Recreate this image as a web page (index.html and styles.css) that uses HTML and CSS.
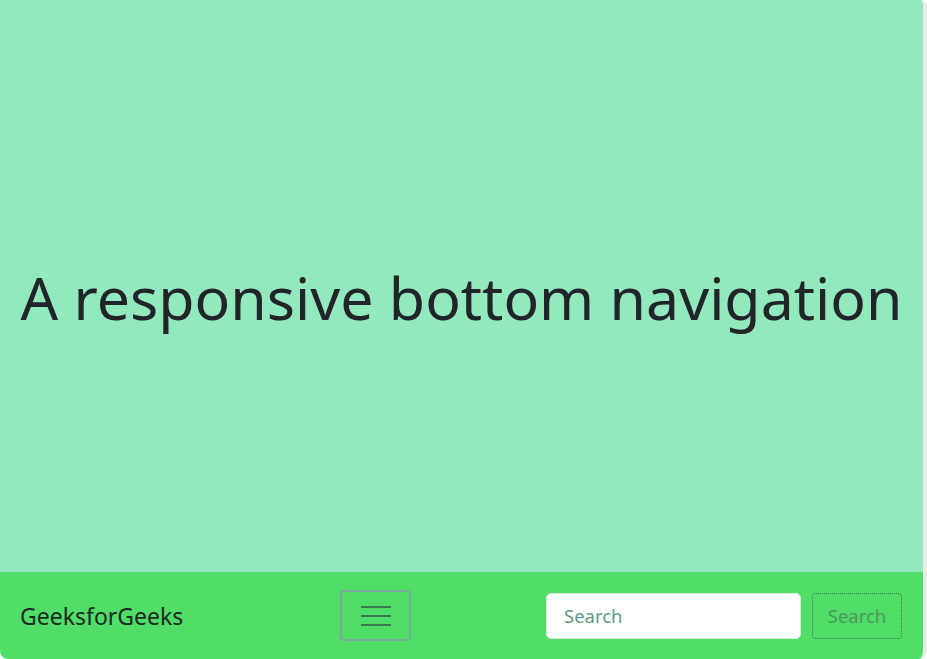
FILE: index.html
```html
<!DOCTYPE html>
<html>
<head>
<meta charset="utf-8">
<link rel="stylesheet" href="styles.css">
</head>
<body>
<div class="page">
  <main class="hero">
    <h1 class="title">A responsive bottom navigation</h1>
  </main>
  <nav class="navbar">
    <div class="brand-wrap"><a class="brand">GeeksforGeeks</a></div>
    <button class="toggler" aria-label="menu">
      <span class="bar"></span><span class="bar"></span><span class="bar"></span>
    </button>
    <form class="search">
      <input class="search-input" type="text" placeholder="Search">
      <button class="search-btn" type="button">Search</button>
    </form>
  </nav>
</div>
</body>
</html>
```
FILE: styles.css
```css
html, body {
  margin: 0;
  padding: 0;
  background: #ffffff;
}
body {
  font-family: "Noto Sans", "Open Sans", sans-serif;
  color: #212529;
}
.page {
  width: 923px;
  height: 659px;
  display: flex;
  flex-direction: column;
  border-right: 4px solid #e9ecea;
  border-radius: 0 6px 8px 8px;
  overflow: hidden;
}
.hero {
  flex: 1;
  background: #93e9be;
  display: flex;
  align-items: center;
  justify-content: center;
}
.title {
  margin: 0;
  font-weight: 400;
  font-size: 59px;
  line-height: 1.2;
  color: #212529;
  padding-top: 22px;
  white-space: nowrap;
}
.navbar {
  height: 87px;
  background: #50dd68;
  display: flex;
  align-items: center;
  padding: 0 21px 0 20px;
  box-sizing: border-box;
}
.brand-wrap {
  width: 320px;
}
.brand {
  font-size: 23px;
  color: #1d2a22;
}
.toggler {
  width: 71px;
  height: 51px;
  box-sizing: border-box;
  border: 2px solid #7ba99c;
  border-radius: 4px;
  background: transparent;
  display: flex;
  flex-direction: column;
  align-items: center;
  justify-content: center;
  gap: 7px;
  padding: 0;
}
.bar {
  display: block;
  width: 30px;
  height: 2px;
  background: #3c7a4f;
}
.search {
  margin-left: auto;
  display: flex;
  align-items: center;
  gap: 11px;
}
.search-input {
  width: 255px;
  height: 46px;
  box-sizing: border-box;
  border: 1px solid #dfe5e1;
  border-radius: 5px;
  background: #ffffff;
  padding: 0 16px 0 17px;
  font-family: inherit;
  font-size: 18.5px;
  color: #3d6f5a;
  outline: none;
}
.search-input::placeholder {
  color: #5e9b83;
}
.search-btn {
  width: 90px;
  height: 46px;
  box-sizing: border-box;
  border: 1px dotted #4a6e52;
  border-radius: 4px;
  background: transparent;
  font-family: inherit;
  font-size: 18.5px;
  color: #4e9a5e;
  padding: 0;
}
```
